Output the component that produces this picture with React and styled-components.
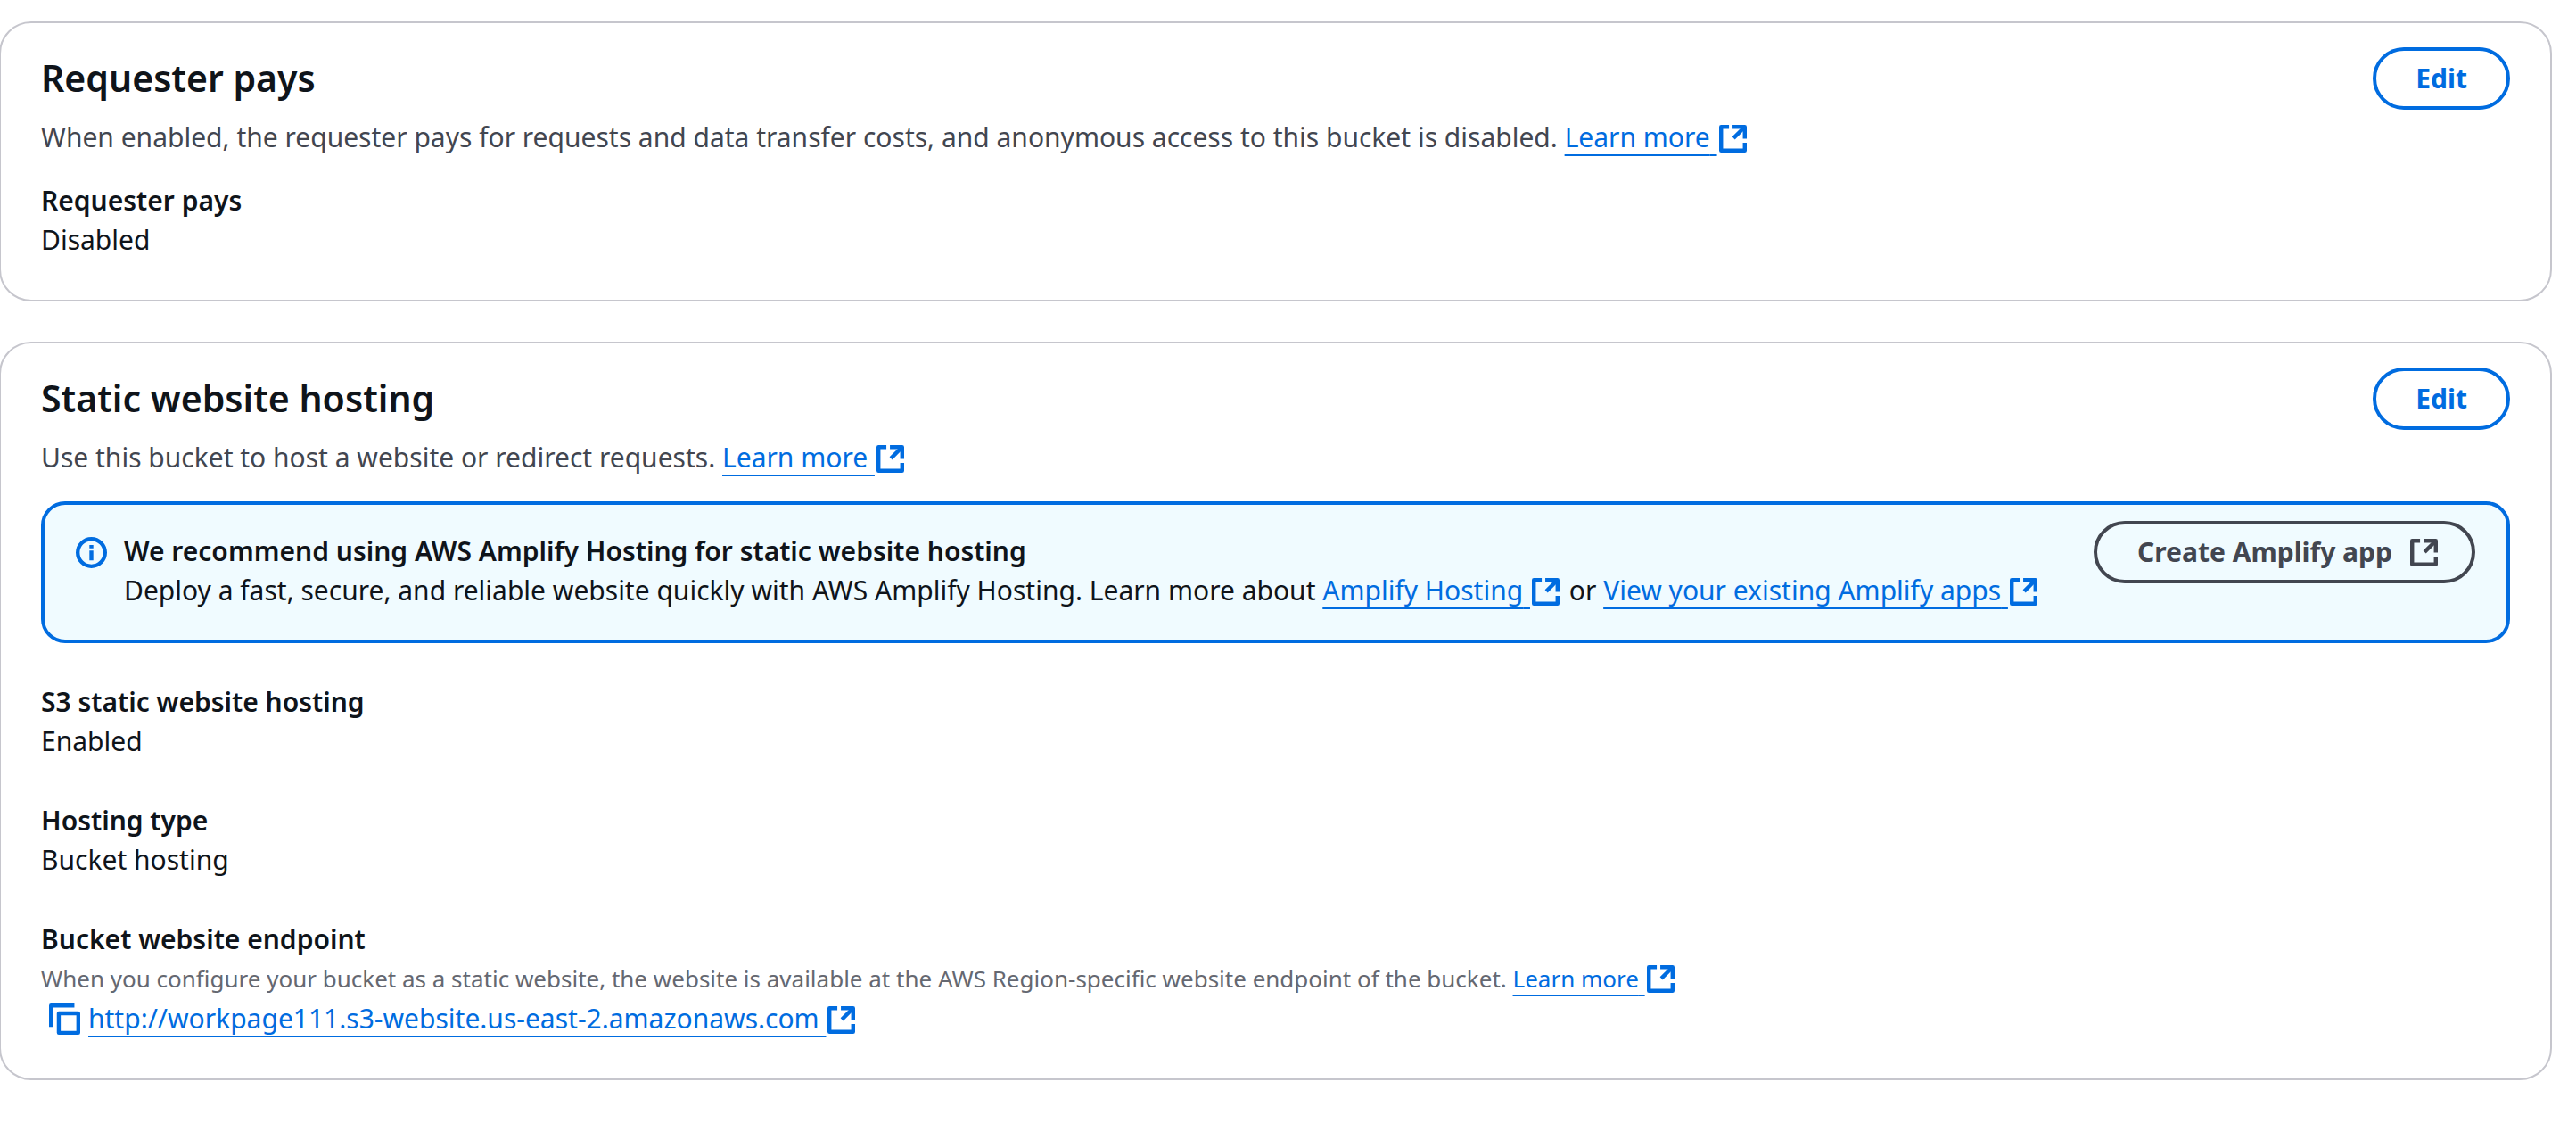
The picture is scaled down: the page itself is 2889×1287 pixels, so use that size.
import React from "react";
import styled, { createGlobalStyle } from "styled-components";

const GlobalStyle = createGlobalStyle`
  *, *::before, *::after { box-sizing: border-box; }
  body {
    margin: 0;
    background: #ffffff;
    color: #0f141a;
    font-family: "Noto Sans", "Open Sans", sans-serif;
    font-size: 30px;
    line-height: 44px;
  }
`;

const Page = styled.main`
  display: flex;
  flex-direction: column;
  gap: 45px;
  margin: 24px 27px 75px -1px;
`;

const Card = styled.section`
  display: flex;
  flex-direction: column;
  gap: 27px;
  padding: 27px 45px 45px;
  border: 2px solid #c6c6cd;
  border-radius: 36px;
  background: #ffffff;
`;

const CardHeader = styled.header`
  display: flex;
  align-items: flex-start;
  justify-content: space-between;
  gap: 36px;
`;

const HeaderText = styled.div`
  display: flex;
  flex-direction: column;
  gap: 18px;
  padding-top: 7px;
`;

const Title = styled.h2`
  margin: 0;
  font-size: 41px;
  line-height: 54px;
  font-weight: 600;
`;

const Description = styled.p`
  margin: 0;
  color: #424650;
`;

const Button = styled.button`
  display: inline-flex;
  align-items: center;
  flex-shrink: 0;
  gap: 20px;
  height: 70px;
  padding: ${(p) => (p.$neutral ? "0 38px 0 45px" : "0 44px")};
  border: 4px solid currentColor;
  border-radius: 35px;
  background: transparent;
  color: ${(p) => (p.$neutral ? "#424650" : "#006ce0")};
  font: inherit;
  font-weight: 700;
  white-space: nowrap;
  cursor: pointer;
`;

const Details = styled.div`
  display: flex;
  flex-direction: column;
  gap: 44px;
`;

const Fields = styled.dl`
  display: flex;
  flex-direction: column;
  gap: 45px;
  margin: 0;
`;

const Field = styled.div``;

const Label = styled.dt`
  font-weight: 600;
`;

const Value = styled.dd`
  margin: 0;
`;

const Hint = styled.dd`
  margin: 0;
  color: #656871;
  font-size: 26px;
  line-height: 45px;
`;

const Anchor = styled.a`
  color: #006ce0;
  text-decoration: none;
`;

const AnchorText = styled.span`
  text-decoration: underline 2px;
  text-decoration-skip-ink: none;
  text-underline-offset: 8px;
  white-space: pre-wrap;
`;

const Glyph = styled.svg`
  flex-shrink: 0;
  width: ${(p) => p.$size}px;
  height: ${(p) => p.$size}px;
  fill: none;
  stroke: currentColor;
  stroke-width: 2;
  stroke-linejoin: round;
`;

const InlineGlyph = styled(Glyph)`
  margin: 0 3px 0 2px;
  vertical-align: -6px;
`;

const Alert = styled.div`
  display: flex;
  align-items: flex-start;
  gap: 19px;
  padding: 18px 35px 33px;
  border: 4px solid #006ce0;
  border-radius: 27px;
  background: #f0fbff;
`;

const AlertIcon = styled.span`
  display: flex;
  padding-top: 18px;
  color: #006ce0;
`;

const AlertText = styled.div`
  flex: 1;
  padding-top: 12px;
`;

const AlertTitle = styled.div`
  font-weight: 600;
`;

const CopyRow = styled.span`
  display: flex;
  align-items: center;
  gap: 9px;
  padding-left: 9px;
`;

const CopyButton = styled.button`
  display: flex;
  padding: 0;
  border: 0;
  background: none;
  color: #006ce0;
  cursor: pointer;
`;

function ExternalPaths() {
  return (
    <>
      <path d="M6 2H2V14H14V10" />
      <path d="M7.8 2H14V8" />
      <path d="M14 2L8.3 7.7" />
    </>
  );
}

function ExternalLink({ href = "#", children }) {
  return (
    <Anchor href={href}>
      <AnchorText>{children} </AnchorText>
      <InlineGlyph $size={31} viewBox="1 1 14 14" aria-hidden="true">
        <ExternalPaths />
      </InlineGlyph>
    </Anchor>
  );
}

function InfoIcon() {
  return (
    <Glyph $size={35} viewBox="0 0 16 16" aria-hidden="true">
      <circle cx="8" cy="8" r="7" />
      <path d="M8 4.1V5.8M8 7V12" />
    </Glyph>
  );
}

function CopyIcon() {
  return (
    <Glyph $size={35} viewBox="0 0 16 16" aria-hidden="true">
      <path d="M1 12V1H13" />
      <path d="M5 5H15V15H5Z" />
    </Glyph>
  );
}

function Header({ title, children }) {
  return (
    <CardHeader>
      <HeaderText>
        <Title>{title}</Title>
        <Description>{children}</Description>
      </HeaderText>
      <Button type="button">Edit</Button>
    </CardHeader>
  );
}

export default function App() {
  return (
    <>
      <GlobalStyle />
      <Page>
        <Card>
          <Header title="Requester pays">
            When enabled, the requester pays for requests and data transfer costs, and anonymous
            access to this bucket is disabled. <ExternalLink>Learn more</ExternalLink>
          </Header>
          <Fields>
            <Field>
              <Label>Requester pays</Label>
              <Value>Disabled</Value>
            </Field>
          </Fields>
        </Card>

        <Card>
          <Header title="Static website hosting">
            Use this bucket to host a website or redirect requests.{" "}
            <ExternalLink>Learn more</ExternalLink>
          </Header>
          <Details>
            <Alert>
              <AlertIcon>
                <InfoIcon />
              </AlertIcon>
              <AlertText>
                <AlertTitle>
                  We recommend using AWS Amplify Hosting for static website hosting
                </AlertTitle>
                <div>
                  Deploy a fast, secure, and reliable website quickly with AWS Amplify Hosting.
                  Learn more about <ExternalLink>Amplify Hosting</ExternalLink> or{" "}
                  <ExternalLink>View your existing Amplify apps</ExternalLink>
                </div>
              </AlertText>
              <Button type="button" $neutral>
                Create Amplify app
                <Glyph $size={31} viewBox="1 1 14 14" aria-hidden="true">
                  <ExternalPaths />
                </Glyph>
              </Button>
            </Alert>
            <Fields>
              <Field>
                <Label>S3 static website hosting</Label>
                <Value>Enabled</Value>
              </Field>
              <Field>
                <Label>Hosting type</Label>
                <Value>Bucket hosting</Value>
              </Field>
              <Field>
                <Label>Bucket website endpoint</Label>
                <Hint>
                  When you configure your bucket as a static website, the website is available at
                  the AWS Region-specific website endpoint of the bucket.{" "}
                  <ExternalLink>Learn more</ExternalLink>
                </Hint>
                <Value>
                  <CopyRow>
                    <CopyButton type="button" aria-label="Copy endpoint">
                      <CopyIcon />
                    </CopyButton>
                    <span>
                      <ExternalLink href="http://workpage111.s3-website.us-east-2.amazonaws.com">
                        http://workpage111.s3-website.us-east-2.amazonaws.com
                      </ExternalLink>
                    </span>
                  </CopyRow>
                </Value>
              </Field>
            </Fields>
          </Details>
        </Card>
      </Page>
    </>
  );
}
